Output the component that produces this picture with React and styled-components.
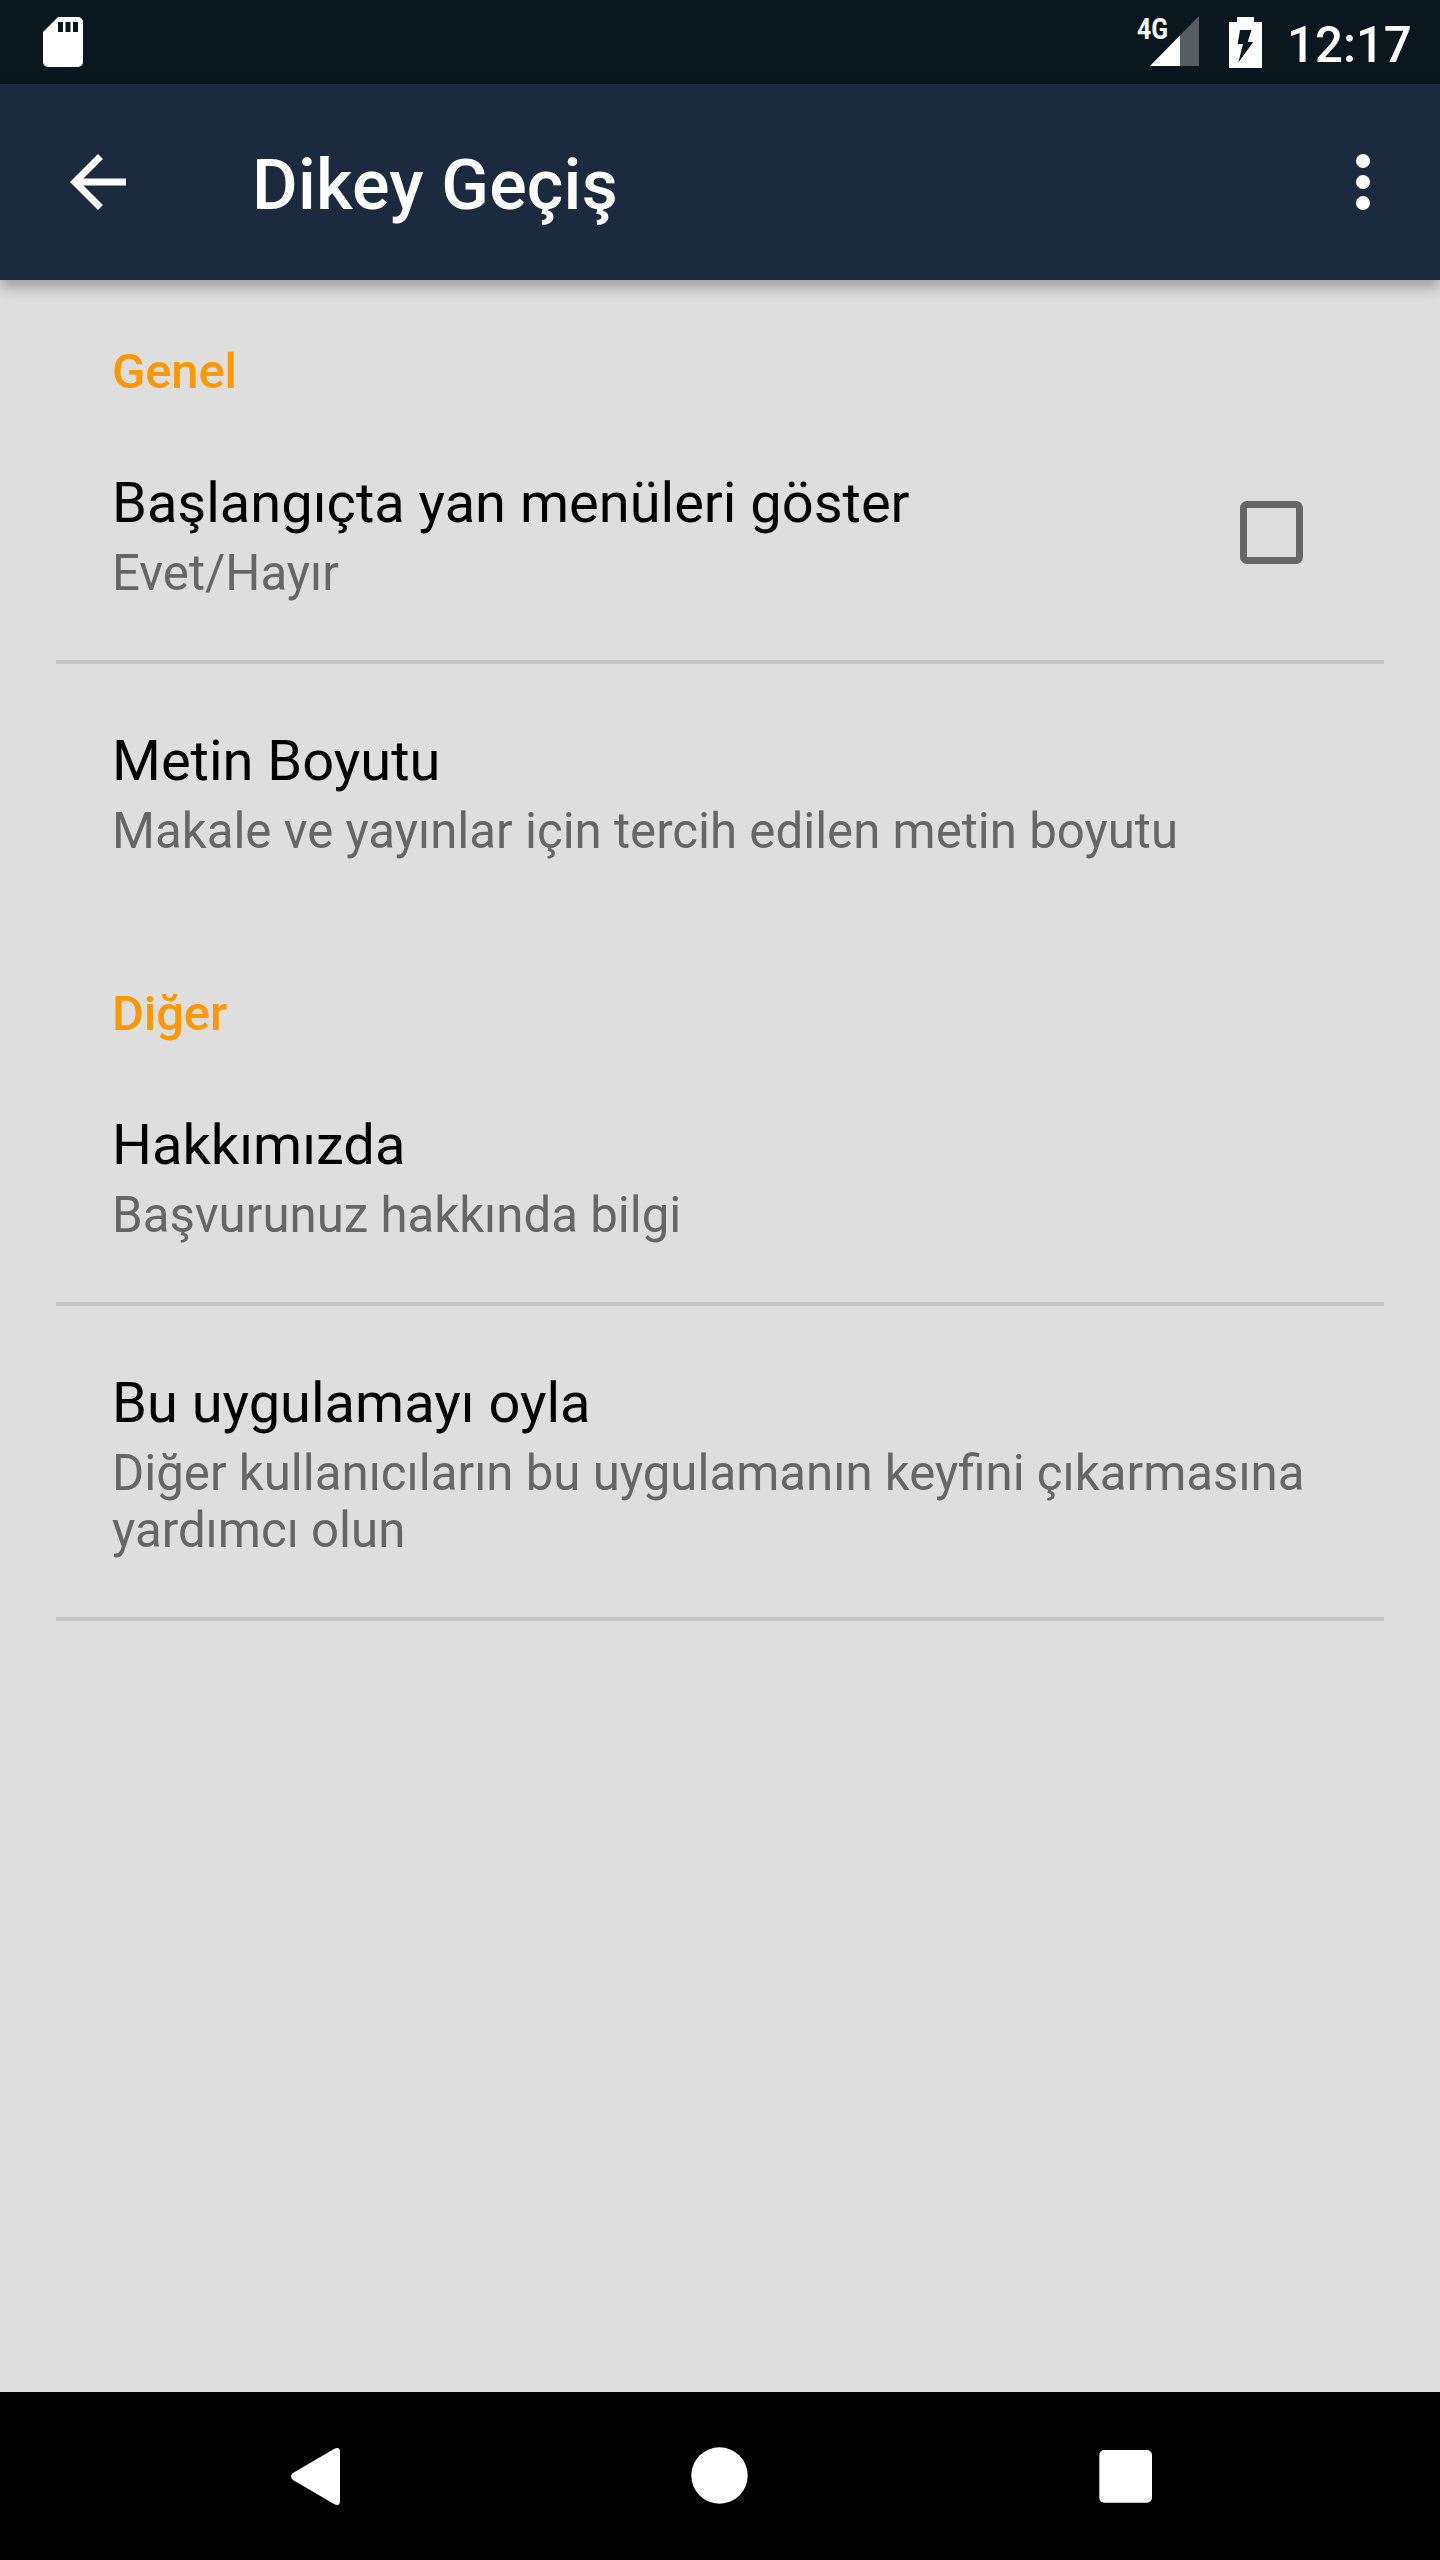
import { useState } from "react";
import styled, { createGlobalStyle } from "styled-components";

const GlobalStyle = createGlobalStyle`
  * {
    box-sizing: border-box;
  }

  body {
    margin: 0;
    background: #dedede;
    font-family: Roboto, "Noto Sans", sans-serif;
  }
`;

const Screen = styled.div`
  width: 1440px;
  height: 2560px;
  display: flex;
  flex-direction: column;
  background: #dedede;
  overflow: hidden;
`;

const StatusBar = styled.div`
  height: 84px;
  flex: none;
  display: flex;
  align-items: center;
  padding: 0 28px 0 43px;
  background: #0b171f;
  color: #ffffff;

  svg {
    display: block;
  }
`;

const StatusIcons = styled.div`
  display: flex;
  align-items: center;
  margin-left: auto;
`;

const Signal = styled.svg`
  margin-right: 29px;
`;

const Clock = styled.span`
  width: 125px;
  margin-left: 25px;
  padding-top: 5px;
  font-size: 49.2px;
  font-weight: 500;
  line-height: 58px;
  white-space: nowrap;
`;

const AppBar = styled.header`
  height: 196px;
  flex: none;
  display: flex;
  align-items: center;
  padding: 0 35px 0 56px;
  background: #1c2a40;
  box-shadow: 0 7px 14px rgba(0, 0, 0, 0.3);
`;

const IconBtn = styled.button`
  display: block;
  padding: 0;
  border: none;
  background: none;
  color: #ffffff;
  cursor: pointer;

  svg {
    display: block;
  }
`;

const Title = styled.h1`
  flex: 1;
  margin: 0 0 0 112px;
  padding-top: 6px;
  font-size: 70px;
  font-weight: 500;
  line-height: 82px;
  letter-spacing: 0.2px;
  color: #ffffff;
`;

const Content = styled.main`
  flex: 1;
  padding: 0 56px;
`;

const Category = styled.h2`
  height: 126px;
  margin: 0;
  padding: 63px 56px 0;
  font-size: 49px;
  font-weight: 500;
  line-height: 57px;
  letter-spacing: -0.15px;
  color: #ff9800;
`;

const Row = styled.div`
  display: flex;
  align-items: flex-start;
  justify-content: space-between;
  padding: 64px 56px 58px;
  border-bottom: 4px solid ${({ $last }) => ($last ? "transparent" : "#c4c4c4")};
`;

const RowTitle = styled.div`
  margin-bottom: 9px;
  font-size: 56px;
  line-height: 66px;
  color: #000000;
`;

const Summary = styled.div`
  font-size: 49.2px;
  line-height: 57px;
  color: #666666;
`;

const Checkbox = styled.button`
  width: 63px;
  height: 63px;
  flex: none;
  margin: 31px 25px 0 0;
  padding: 0;
  border: 7px solid #666666;
  border-radius: 7px;
  background: ${({ $checked }) => ($checked ? "#666666" : "transparent")};
  cursor: pointer;
`;

const NavBar = styled.nav`
  height: 168px;
  flex: none;
  display: flex;
  align-items: center;
  justify-content: center;
  gap: 264px;
  background: #000000;
`;

const sections = [
  {
    name: "Genel",
    items: [
      { id: "menu", title: "Başlangıçta yan menüleri göster", summary: "Evet/Hayır", checkbox: true },
      { id: "size", title: "Metin Boyutu", summary: "Makale ve yayınlar için tercih edilen metin boyutu", last: true },
    ],
  },
  {
    name: "Diğer",
    items: [
      { id: "about", title: "Hakkımızda", summary: "Başvurunuz hakkında bilgi" },
      {
        id: "rate",
        title: "Bu uygulamayı oyla",
        summary: "Diğer kullanıcıların bu uygulamanın keyfini çıkarmasına yardımcı olun",
      },
    ],
  },
];

export default function App() {
  const [showMenus, setShowMenus] = useState(false);

  return (
    <Screen>
      <GlobalStyle />
      <StatusBar>
        <svg width="40" height="50" viewBox="0 0 40 50" fill="#fff">
          <path
            fillRule="evenodd"
            d="M15 0H35a5 5 0 0 1 5 5V45a5 5 0 0 1-5 5H5a5 5 0 0 1-5-5V15ZM15 5V15H20V5ZM22.500 5V15H27.500V5ZM30 5V15H35V5Z"
          />
        </svg>
        <StatusIcons>
          <Signal width="64" height="68" viewBox="-2 -8 64 68">
            <path d="M61 0V50H12Z" fill="#565e64" />
            <path d="M42 19.500V50H12Z" fill="#fff" />
            <text x="-1" y="23" fontSize="29" fontWeight="700" fill="#fff" textLength="31" lengthAdjust="spacingAndGlyphs">
              4G
            </text>
          </Signal>
          <svg width="33" height="51" viewBox="0 0 33 51" fill="#fff">
            <path fillRule="evenodd" d="M8 0H25V5H33V51H0V5H8ZM11 13L8.700 27H14L9.300 45.500L24.300 25H18.700L22.500 13Z" />
          </svg>
          <Clock>12:17</Clock>
        </StatusIcons>
      </StatusBar>

      <AppBar>
        <IconBtn aria-label="Geri">
          <svg width="84" height="84" viewBox="0 0 24 24" fill="currentColor">
            <path d="M20 11H7.830l5.590-5.590L12 4l-8 8 8 8 1.410-1.410L7.830 13H20v-2z" />
          </svg>
        </IconBtn>
        <Title>Dikey Geçiş</Title>
        <IconBtn aria-label="Menü">
          <svg width="84" height="84" viewBox="0 0 24 24" fill="currentColor">
            <circle cx="12" cy="6" r="2" />
            <circle cx="12" cy="12" r="2" />
            <circle cx="12" cy="18" r="2" />
          </svg>
        </IconBtn>
      </AppBar>

      <Content>
        {sections.map((section) => (
          <section key={section.name}>
            <Category>{section.name}</Category>
            {section.items.map((item) => (
              <Row key={item.id} $last={item.last}>
                <div>
                  <RowTitle>{item.title}</RowTitle>
                  <Summary>{item.summary}</Summary>
                </div>
                {item.checkbox && (
                  <Checkbox $checked={showMenus} onClick={() => setShowMenus(!showMenus)} />
                )}
              </Row>
            ))}
          </section>
        ))}
      </Content>

      <NavBar>
        <IconBtn>
          <svg width="144" height="168" viewBox="0 0 144 168" fill="currentColor">
            <path d="M49 60V109Q49 115 43 112L2 88Q-2 84.500 2 81L43 57Q49 54 49 60Z" transform="translate(51 0)" />
          </svg>
        </IconBtn>
        <IconBtn>
          <svg width="144" height="168" viewBox="0 0 144 168" fill="currentColor">
            <circle cx="71.500" cy="83.500" r="28.200" />
          </svg>
        </IconBtn>
        <IconBtn>
          <svg width="144" height="168" viewBox="0 0 144 168" fill="currentColor">
            <rect x="43.300" y="58" width="52.700" height="52.700" rx="5" />
          </svg>
        </IconBtn>
      </NavBar>
    </Screen>
  );
}
